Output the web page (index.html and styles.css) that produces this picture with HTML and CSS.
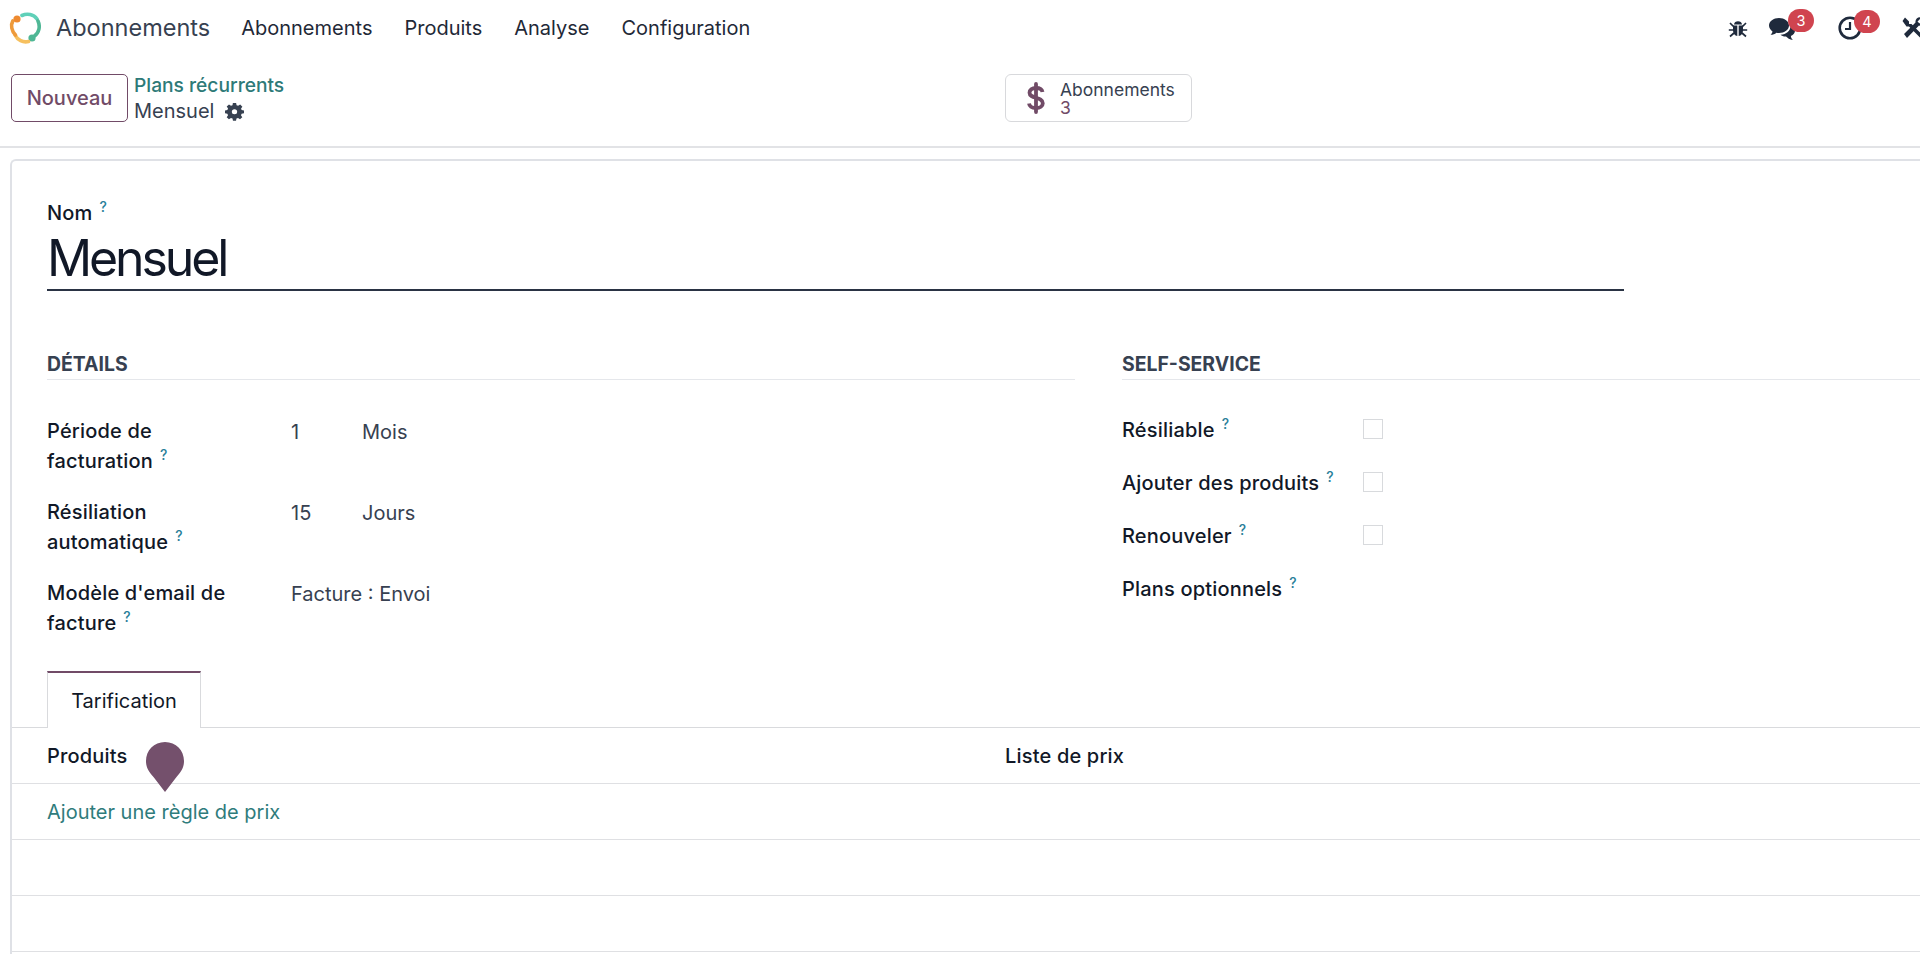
FILE: index.html
```html
<!DOCTYPE html>
<html lang="fr">
<head>
<meta charset="utf-8">
<title>Plans récurrents - Mensuel</title>
<link rel="stylesheet" href="styles.css">
</head>
<body>
<header class="navbar">
  <svg class="logo" viewBox="0 0 32 32" width="32" height="32" fill="none" stroke-linecap="round">
    <path d="M13 3.500C18 1.200 24.500 2.200 28 7" stroke="#5fd0b8" stroke-width="3.600"/>
    <path d="M29 9C31.500 14.500 30 21 25.500 24" stroke="#4fb795" stroke-width="3.600"/>
    <circle cx="23" cy="26" r="3.600" fill="#4fb795"/>
    <path d="M6 23C8.500 28 14 31 19.500 29.500" stroke="#f6c05f" stroke-width="3.600"/>
    <path d="M6.500 23C2.500 19 1.500 13 3.800 9" stroke="#ee9a3a" stroke-width="3.600"/>
    <circle cx="8" cy="7" r="3.600" fill="#ee8a30"/>
  </svg>
  <span class="brand">Abonnements</span>
  <nav class="menu">
    <span>Abonnements</span>
    <span>Produits</span>
    <span>Analyse</span>
    <span>Configuration</span>
  </nav>
  <div class="systray">
    <svg class="tray-bug" viewBox="0 0 20 20" width="20" height="20" fill="#1f2a3c" stroke="#1f2a3c">
      <path d="M6 6.500C6 2 14 2 14 6.500Z" stroke="none"/>
      <path d="M5 7.500H9.300V18C6.800 17.800 5 15.500 5 12.500ZM10.700 7.500H15V12.500C15 15.500 13.200 17.800 10.700 18Z" stroke="none"/>
      <path d="M2 5L5.500 8.500M18 5L14.500 8.500M.8 12H5.500M19.200 12H14.500M2 18.500L6 15M18 18.500L14 15" stroke-width="1.700" fill="none"/>
    </svg>
    <div class="tray-item tray-chat">
      <svg viewBox="0 0 28 26" width="28" height="26" fill="#1f2a3c">
        <path d="M11 3C5.500 3 1 6.300 1 10.500C1 13 2.500 15 4.500 16.400C4.300 17.800 3.500 18.800 2.500 19.800C5 19.800 7 19 8.300 17.700C9.200 17.900 10 18 11 18C16.500 18 21 14.700 21 10.500S16.500 3 11 3Z"/>
        <path d="M22.500 11C22.600 15.500 18.500 19.500 12.500 19.700C14 21 16 21.700 18 21.500C19.500 23 21.500 24.500 25 25C23.800 24 23 22.800 22.900 21C25.500 19.800 27 17.800 27 15.500C27 13.800 25 11.800 22.500 11Z"/>
      </svg>
      <span class="badge">3</span>
    </div>
    <div class="tray-item tray-clock">
      <svg viewBox="0 0 24 24" width="24" height="24" fill="none" stroke="#1f2a3c">
        <circle cx="12" cy="12" r="10.300" stroke-width="2.600"/>
        <path d="M12 6V13H7" stroke-width="2.200"/>
      </svg>
      <span class="badge">4</span>
    </div>
    <svg class="tray-tools" viewBox="0 0 24 24" width="24" height="24" fill="#1f2a3c">
      <path d="M3 1.500L7 5.500V8H9.500L22 20.500L19.500 23L7 10.500H4.500L.5 5Z"/>
      <path d="M22 3L17.500 7.500L15.500 5.500L19.500 1.500C16 .5 13 3 13.500 6.500L2 18L5 22L17 9.500C20 10.500 23 7.500 22 3Z"/>
    </svg>
  </div>
</header>

<section class="control-panel">
  <button class="btn-new" type="button">Nouveau</button>
  <div class="breadcrumb">
    <a class="crumb-link">Plans récurrents</a>
    <div class="crumb-current">
      <span>Mensuel</span>
      <svg viewBox="0 0 20 20" width="19" height="19" fill="#374151">
        <path fill-rule="evenodd" d="M8.300 1H11.700L12.200 3.500L13.800 4.200L16 2.800L18.300 5.200L16.900 7.300L17.500 8.900L20 9.400V12.600L17.500 13.100L16.800 14.700L18.200 16.900L15.800 19.100L13.700 17.700L12.100 18.400L11.600 20.800H8.400L7.900 18.400L6.300 17.700L4.100 19.100L1.800 16.800L3.200 14.700L2.500 13.100L0 12.600V9.300L2.500 8.900L3.200 7.300L1.800 5.100L4.200 2.800L6.300 4.200L7.900 3.500ZM10 8.100A2.800 2.800 0 1 0 10 13.700A2.800 2.800 0 1 0 10 8.100Z" transform="scale(1 .95)"/>
      </svg>
    </div>
  </div>
  <div class="stat-wrap">
    <button class="stat" type="button">
      <svg viewBox="0 0 18 32" width="18" height="32" fill="none" stroke="#714b67" stroke-width="3.800">
        <path d="M15.500 10C15 7 12.500 6 9 6C5 6 2.500 8 2.500 10.800C2.500 17 15.800 14.500 15.800 21.200C15.800 24 13 26 9 26C5 26 2.500 24.500 2 21.500"/>
        <path d="M9 2V30" stroke-linecap="round"/>
      </svg>
      <span class="stat-text">
        <span class="stat-label">Abonnements</span>
        <span class="stat-value">3</span>
      </span>
    </button>
  </div>
</section>

<main class="sheet">
  <div class="title-area">
    <label class="field-label">Nom<sup class="help">?</sup></label>
    <div class="title-input">Mensuel</div>
  </div>

  <div class="groups">
    <section class="group">
      <h2 class="group-title">DÉTAILS</h2>
      <div class="rows">
        <div class="row">
          <label class="field-label">Période de facturation<sup class="help">?</sup></label>
          <div class="value"><span class="num">1</span><span>Mois</span></div>
        </div>
        <div class="row">
          <label class="field-label">Résiliation automatique<sup class="help">?</sup></label>
          <div class="value"><span class="num">15</span><span>Jours</span></div>
        </div>
        <div class="row">
          <label class="field-label">Modèle d'email de facture<sup class="help">?</sup></label>
          <div class="value"><span>Facture : Envoi</span></div>
        </div>
      </div>
    </section>
    <section class="group">
      <h2 class="group-title">SELF-SERVICE</h2>
      <div class="checks">
        <div class="check-row">
          <label class="field-label">Résiliable<sup class="help">?</sup></label>
          <span class="checkbox"></span>
        </div>
        <div class="check-row">
          <label class="field-label">Ajouter des produits<sup class="help">?</sup></label>
          <span class="checkbox"></span>
        </div>
        <div class="check-row">
          <label class="field-label">Renouveler<sup class="help">?</sup></label>
          <span class="checkbox"></span>
        </div>
        <div class="check-row">
          <label class="field-label">Plans optionnels<sup class="help">?</sup></label>
        </div>
      </div>
    </section>
  </div>

  <div class="tabs"><span class="tab">Tarification</span></div>

  <div class="table">
    <div class="t-row t-head">
      <span class="col-a">Produits</span>
      <span>Liste de prix</span>
    </div>
    <div class="t-row"><a class="add-line">Ajouter une règle de prix</a></div>
    <div class="t-row"></div>
    <div class="t-row"></div>
  </div>
  <svg class="pin" viewBox="0 0 40 52" width="40" height="52"><path d="M20 1C9 1 1 9.500 1 20C1 27 4 31 8.500 36L20 51L31.500 36C36 31 39 27 39 20C39 9.500 31 1 20 1Z" fill="#74506c"/></svg>
</main>
</body>
</html>
```
FILE: styles.css
```css
* { box-sizing: border-box; }
html, body { margin: 0; height: 954px; overflow: hidden; }
body {
  width: 1920px;
  background: #fff;
  color: #111827;
  font-family: Inter, "Liberation Sans", sans-serif;
  font-size: 20px;
  line-height: 24px;
}
.navbar {
  height: 56px;
  display: flex;
  align-items: center;
  padding-left: 9px;
  position: relative;
}
.logo { flex: none; }
.brand { margin-left: 15px; font-size: 23.500px; color: #374151; }
.menu { display: flex; gap: 32px; margin-left: 31px; color: #1f2937; }
.systray {
  margin-left: auto;
  display: flex;
  align-items: center;
  height: 56px;
  flex: none;
  width: 192px;
  position: relative;
  overflow: hidden;
}
.tray-bug { flex: none; }
.tray-item { position: relative; flex: none; display: flex; }
.tray-chat { margin-left: 20px; }
.tray-clock { margin-left: 42px; }
.tray-clock .badge { left: 16px; }
.tray-tools { margin-left: 40px; flex: none; }
.badge {
  position: absolute;
  top: -6px;
  left: 20px;
  min-width: 26px;
  height: 23px;
  border-radius: 12px;
  background: #d0444f;
  color: #fff;
  font-size: 14.500px;
  line-height: 23px;
  text-align: center;
}
.control-panel {
  height: 92px;
  border-bottom: 2px solid #e2e3e6;
  display: flex;
  align-items: flex-start;
  padding: 18px 0 0 11px;
  position: relative;
}
.btn-new {
  width: 117px;
  height: 48px;
  flex: none;
  border: 1.500px solid #714b67;
  border-radius: 5px;
  background: #fff;
  color: #714b67;
  font: 500 20px Inter, sans-serif;
}
.breadcrumb { margin-left: 6px; margin-top: -1px; flex: none; width: 871px; }
.crumb-link { display: block; color: #2d7a78; font-weight: 500; font-size: 19.200px; line-height: 25px; }
.crumb-current { display: flex; align-items: center; gap: 11px; color: #374151; line-height: 27px; }
.stat-wrap { flex: none; }
.stat {
  width: 187px;
  height: 48px;
  border: 1.500px solid #d8d9dc;
  border-radius: 6px;
  background: #fff;
  display: flex;
  align-items: center;
  padding: 0 0 0 21px;
  font-family: inherit;
}
.stat-text { display: flex; flex-direction: column; margin-left: 15px; padding-top: 2px; text-align: left; font-size: 17.500px; line-height: 18px; }
.stat-label { color: #374151; }
.stat-value { color: #714b67; }
.sheet {
  margin: 11px 0 0 10px;
  height: 800px;
  background: #fff;
  border-left: 2px solid #dfe1e6;
  border-top: 2px solid #dfe1e6;
  border-top-left-radius: 6px;
  position: relative;
}
.title-area { padding: 40px 0 0 35px; width: 1612px; }
.field-label { font-weight: 500; color: #111827; letter-spacing: .18px; }
.help { color: #2a7f9a; font-size: 14px; font-weight: 500; margin-left: 7px; line-height: 0; vertical-align: 8px; }
.title-input {
  font-size: 50px;
  letter-spacing: -3.100px;
  line-height: 61px;
  height: 63px;
  margin-top: 3px;
  color: #111827;
  border-bottom: 2px solid #2a3344;
}
.groups { display: grid; grid-template-columns: 1028px 1fr; gap: 47px; padding-left: 35px; margin-top: 60px; }
.group-title {
  margin: 0;
  height: 29px;
  padding-top: 3px;
  font-size: 19.400px;
  line-height: 20px;
  font-weight: 700;
  color: #374151;
  border-bottom: 1px solid #e5e7eb;
}
.rows { margin-top: 36px; display: flex; flex-direction: column; gap: 20px; }
.row { display: grid; grid-template-columns: 244px 1fr; line-height: 30px; min-height: 61px; }
.row .field-label { width: 190px; }
.value { color: #374151; display: flex; padding-top: 1px; }
.num { width: 71px; }
.checks { margin-top: 35px; display: flex; flex-direction: column; gap: 23px; }
.check-row { display: grid; grid-template-columns: 241px 20px; line-height: 30px; height: 30px; align-items: center; }
.checkbox { width: 20px; height: 20px; border: 1.500px solid #d8dadd; margin-top: -2px; }
.tabs { margin-top: 32px; height: 57px; border-bottom: 1px solid #d9dadd; padding-left: 35px; }
.tab {
  display: block;
  width: 154px;
  height: 57px;
  border: 1px solid #d9dadd;
  border-top: 2px solid #714b67;
  border-bottom: 0;
  background: #fff;
  text-align: center;
  line-height: 56px;
  color: #111827;
}
.t-row {
  height: 56px;
  display: flex;
  align-items: center;
  padding-left: 35px;
  border-bottom: 1.500px solid #dfe0e3;
}
.t-head { font-weight: 500; letter-spacing: .18px; }
.col-a { width: 958px; flex: none; }
.add-line { color: #2f7c7c; }
.pin { position: absolute; left: 133px; top: 580px; }
```
